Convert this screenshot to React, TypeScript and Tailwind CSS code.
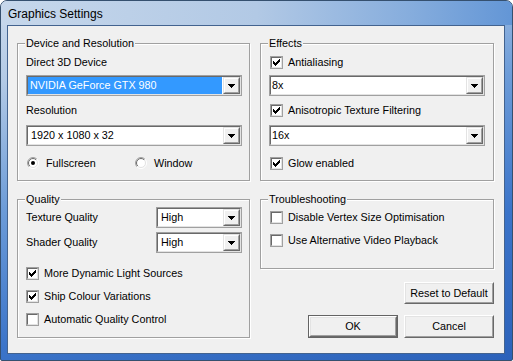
import React from 'react';

// classic win32 bevels
const fieldOuter = 'border border-[#a0a0a0]';
const fieldInner = 'border border-t-[#696969] border-l-[#696969] border-r-[#e3e3e3] border-b-[#e3e3e3]';
const raisedOuter = 'border border-t-[#e3e3e3] border-l-[#e3e3e3] border-r-[#696969] border-b-[#696969]';
const raisedInner = 'border border-t-white border-l-white border-r-[#a0a0a0] border-b-[#a0a0a0]';
const buttonOuter = 'border border-t-white border-l-white border-r-[#696969] border-b-[#696969]';
const buttonInner = 'border border-t-[#e3e3e3] border-l-[#e3e3e3] border-r-[#a0a0a0] border-b-[#a0a0a0]';

const checkRows = ['......X', '.....XX', 'X...XXX', 'XX.XXX.', 'XXXXX..', '.XXX...', '..X....'];

const DownArrow = () => (
  <svg width="7" height="4" shapeRendering="crispEdges">
    <rect x="0" y="0" width="7" height="1" fill="#000" />
    <rect x="1" y="1" width="5" height="1" fill="#000" />
    <rect x="2" y="2" width="3" height="1" fill="#000" />
    <rect x="3" y="3" width="1" height="1" fill="#000" />
  </svg>
);

interface ComboProps {
  value: string;
  width: string;
  selected?: boolean;
  pad?: string;
  className?: string;
}

const Combo: React.FC<ComboProps> = ({ value, width, selected, pad = 'pl-[2px]', className = '' }) => (
  <div className={`${fieldOuter} ${width} h-[21px] shrink-0 ${className}`}>
    <div className={`${fieldInner} flex h-full bg-white`}>
      <div className="flex-1 flex items-center pr-px">
        <div className={`h-full flex-1 flex items-center ${pad} ${selected ? 'bg-[#3399ff] text-white' : ''}`}>
          {value}
        </div>
      </div>
      <div className={`${raisedOuter} w-[17px] h-full bg-[#f0f0f0]`}>
        <div className={`${raisedInner} h-full flex items-center justify-center`}>
          <DownArrow />
        </div>
      </div>
    </div>
  </div>
);

const Check: React.FC<{ checked?: boolean; label: string; className?: string }> = ({ checked, label, className = '' }) => (
  <div className={`flex items-center h-[13px] gap-[5px] ${className}`}>
    <div className={`${fieldOuter} w-[13px] h-[13px] shrink-0`}>
      <div className={`${fieldInner} h-full bg-white`}>
        {checked && (
          <svg width="9" height="9" shapeRendering="crispEdges" className="block">
            {checkRows.map((row, y) =>
              row.split('').map((c, x) =>
                c === 'X' ? <rect key={`${x}-${y}`} x={x + 1} y={y + 1} width="1" height="1" fill="#000" /> : null
              )
            )}
          </svg>
        )}
      </div>
    </div>
    <span className="leading-[13px] whitespace-nowrap">{label}</span>
  </div>
);

const Radio: React.FC<{ checked?: boolean; label: string; className?: string }> = ({ checked, label, className = '' }) => (
  <div className={`flex items-center h-[13px] gap-[6px] ${className}`}>
    <svg width="13" height="13" className="shrink-0 ml-px">
      <defs>
        <linearGradient id="rOut" x1="0" y1="0" x2="1" y2="1">
          <stop offset="50%" stopColor="#a0a0a0" />
          <stop offset="50%" stopColor="#ffffff" />
        </linearGradient>
        <linearGradient id="rIn" x1="0" y1="0" x2="1" y2="1">
          <stop offset="50%" stopColor="#696969" />
          <stop offset="50%" stopColor="#e3e3e3" />
        </linearGradient>
      </defs>
      <circle cx="6" cy="6" r="5.5" fill="none" stroke="url(#rOut)" />
      <circle cx="6" cy="6" r="4.5" fill="#fff" stroke="url(#rIn)" />
      {checked && <circle cx="6" cy="6" r="2" fill="#000" />}
    </svg>
    <span className="leading-[13px] whitespace-nowrap">{label}</span>
  </div>
);

const Group: React.FC<{ title: string; className?: string; children: React.ReactNode }> = ({ title, className = '', children }) => (
  <div className={`relative border border-[#a0a0a0] shadow-[inset_1px_1px_0_#fff,1px_1px_0_#fff] ${className}`}>
    <span className="absolute left-[7px] top-[-7px] bg-[#f0f0f0] px-px leading-[13px]">{title}</span>
    {children}
  </div>
);

const PushButton: React.FC<{ label: string; isDefault?: boolean; className?: string }> = ({ label, isDefault, className = '' }) => (
  <div className={`w-[90px] ${className} ${isDefault ? 'border border-[#646464]' : ''}`}>
    <div className={`${buttonOuter} h-full bg-[#f0f0f0]`}>
      <div className={`${buttonInner} h-full flex items-center justify-center`}>{label}</div>
    </div>
  </div>
);

export default function App() {
  return (
    <div className="w-[513px] h-[361px] flex flex-col overflow-hidden rounded-t-[7px] rounded-b-[2px] border border-[#35506f] bg-[linear-gradient(165deg,#cbdaec_0%,#b3cae6_16%,#6d9cd8_42%,#3b74c9_70%,#2c62ba_100%)] [font-family:'Liberation_Sans',Arial,sans-serif] text-[10.8px] text-black">
      {/* title bar */}
      <div className="h-[24px] shrink-0 flex items-center pl-[7px] pt-px text-[12px] bg-[linear-gradient(90deg,#c6d7eb_0%,#b2c9e5_50%,#86addd_80%,#6396d6_100%)]">
        Graphics Settings
      </div>

      <div className="flex-1 pl-[6px] pr-[7px] pb-[6px]">
        <div className="h-full border border-[#43638f] bg-[#f0f0f0]">
          <div className="flex gap-[10px] pl-[9px] pt-[17px]">
            {/* left column */}
            <div className="w-[233px] flex flex-col gap-[18px]">
              <Group title="Device and Resolution" className="h-[138px] pl-[8px] pt-[12px] flex flex-col">
                <span className="leading-[13px]">Direct 3D Device</span>
                <Combo value="NVIDIA GeForce GTX 980" width="w-[216px]" selected pad="pl-[2px]" className="mt-[6px]" />
                <span className="leading-[13px] mt-[8px]">Resolution</span>
                <Combo value="1920 x 1080 x 32" width="w-[216px]" pad="pl-[3px]" className="mt-[8px]" />
                <div className="flex mt-[11px]">
                  <Radio checked label="Fullscreen" className="w-[108px]" />
                  <Radio label="Window" />
                </div>
              </Group>

              <Group title="Quality" className="h-[139px] pl-[8px] pt-[7px] flex flex-col">
                <div className="flex items-center">
                  <span className="w-[130px] leading-[13px]">Texture Quality</span>
                  <Combo value="High" width="w-[86px]" pad="pl-[3px]" />
                </div>
                <div className="flex items-center mt-[4px]">
                  <span className="w-[130px] leading-[13px]">Shader Quality</span>
                  <Combo value="High" width="w-[86px]" pad="pl-[3px]" />
                </div>
                <div className="flex flex-col gap-[10px] mt-[14px]">
                  <Check checked label="More Dynamic Light Sources" />
                  <Check checked label="Ship Colour Variations" />
                  <Check label="Automatic Quality Control" />
                </div>
              </Group>
            </div>

            {/* right column */}
            <div className="w-[234px] flex flex-col">
              <Group title="Effects" className="h-[138px] pl-[8px] pt-[12px] flex flex-col">
                <Check checked label="Antialiasing" className="ml-px" />
                <Combo value="8x" width="w-[216px]" pad="pl-px" className="mt-[6px]" />
                <Check checked label="Anisotropic Texture Filtering" className="ml-px mt-[8px]" />
                <Combo value="16x" width="w-[216px]" pad="pl-px" className="mt-[8px]" />
                <Check checked label="Glow enabled" className="ml-px mt-[11px]" />
              </Group>

              <Group title="Troubleshooting" className="h-[70px] mt-[18px] pl-[8px] pt-[11px] flex flex-col gap-[10px]">
                <Check label="Disable Vertex Size Optimisation" className="ml-px" />
                <Check label="Use Alternative Video Playback" className="ml-px" />
              </Group>

              <div className="flex justify-end mt-[13px]">
                <PushButton label="Reset to Default" className="h-[22px]" />
              </div>
              <div className="flex justify-end gap-[6px] mt-[11px]">
                <PushButton label="OK" isDefault className="h-[23px]" />
                <PushButton label="Cancel" className="h-[23px]" />
              </div>
            </div>
          </div>
        </div>
      </div>
    </div>
  );
}
